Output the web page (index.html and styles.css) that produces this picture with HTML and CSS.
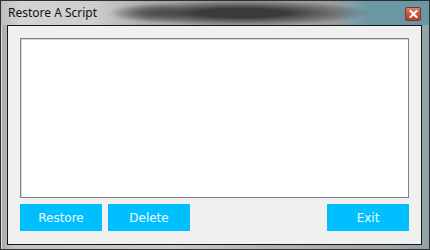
FILE: index.html
```html
<!DOCTYPE html>
<html lang="en">
<head>
    <meta charset="UTF-8">
    <title>Restore A Script</title>
    <link rel="stylesheet" href="styles.css">
</head>
<body>
    <div class="window">
        <div class="titlebar">
            <span class="title">Restore A Script</span>
            <span class="close-btn">
                <svg width="9" height="8" viewBox="0 0 9 8">
                    <path d="M1.5 1 L7.5 7 M7.5 1 L1.5 7" stroke="#fff" stroke-width="2" stroke-linecap="square"/>
                </svg>
            </span>
        </div>
        <div class="client">
            <div class="script-list"></div>
            <div class="button-row">
                <button type="button" class="btn">Restore</button>
                <button type="button" class="btn">Delete</button>
                <button type="button" class="btn btn-right">Exit</button>
            </div>
        </div>
    </div>
</body>
</html>
```
FILE: styles.css
```css
body {
    margin: 0;
    background: #fff;
}
.window {
    width: 430px;
    height: 250px;
    box-sizing: border-box;
    border: 1px solid #2e2e2e;
    padding: 0 7px 4px 6px;
    display: flex;
    flex-direction: column;
    background: linear-gradient(to right, #a9a9a9 0%, #c4c4c4 3%, #c9c9c9 40%, #b5b5b5 60%, #a8a8a8 85%, #8fa4aa 100%);
    box-shadow: inset 1px 1px 0 #e0e0e0;
}
.titlebar {
    height: 23px;
    display: flex;
    align-items: center;
    justify-content: space-between;
    margin: 0 -7px 0 -6px;
    padding: 0 8px 1px 7px;
    background:
        radial-gradient(ellipse 130px 13px at 240px 12px, rgba(40, 40, 40, 0.85) 35%, rgba(40, 40, 40, 0.4) 70%, rgba(40, 40, 40, 0) 100%),
        radial-gradient(ellipse 45px 10px at 150px 12px, rgba(60, 60, 60, 0.5) 20%, rgba(60, 60, 60, 0) 100%),
        linear-gradient(to right, #bdbdbd 0%, #d4d4d4 5%, #cdcdcd 22%, #a9a9a9 35%, #a0a0a0 70%, #9a9a9a 78%, #7fa0a8 82%, #6a97a2 86%, #6a97a2 100%);
}
.title {
    font-family: "Noto Sans", "Open Sans", sans-serif;
    font-size: 12px;
    color: #111;
}
.close-btn {
    width: 14px;
    height: 12px;
    margin-top: 2px;
    display: flex;
    align-items: center;
    justify-content: center;
    border: 1px solid #7a3528;
    border-radius: 2px;
    background: linear-gradient(#d98472, #c45440 50%, #b5412c);
}
.client {
    flex: 1;
    border: 1px solid #151515;
    background: #f0f0f0;
    padding: 12px 12px 13px 12px;
    display: flex;
    flex-direction: column;
    gap: 6px;
}
.script-list {
    flex: 1;
    background: #fff;
    border: 1px solid #838383;
    box-shadow: inset 1px 1px 0 #d8d8d8;
}
.button-row {
    display: flex;
    gap: 6px;
}
.btn {
    width: 82px;
    height: 27px;
    border: none;
    background: #00bfff;
    color: #f2fbff;
    font-family: "DejaVu Sans", Verdana, sans-serif;
    font-size: 12px;
    padding: 0;
}
.btn-right {
    margin-left: auto;
}
```
